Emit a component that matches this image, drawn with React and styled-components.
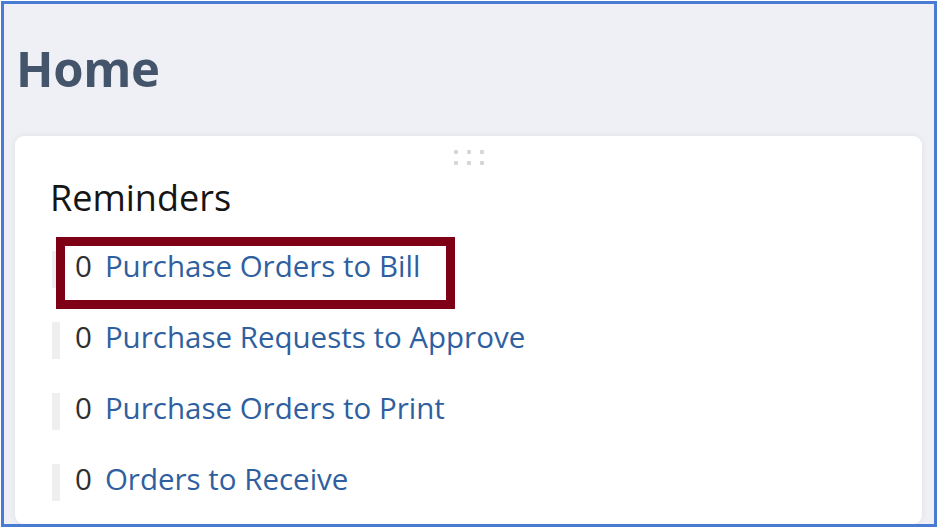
import React from 'react';
import styled, {createGlobalStyle} from 'styled-components';

const GlobalStyle = createGlobalStyle`
  html, body {
    margin: 0;
    padding: 0;
    background: #ffffff;
  }
  body {
    font-family: "Open Sans", "Liberation Sans", sans-serif;
  }
`;

const reminders = [
    {count: 0, label: 'Purchase Orders to Bill', highlighted: true},
    {count: 0, label: 'Purchase Requests to Approve'},
    {count: 0, label: 'Purchase Orders to Print'},
    {count: 0, label: 'Orders to Receive'},
];

export const Frame = styled.div`
  box-sizing: border-box;
  margin: 1px;
  width: 936px;
  height: 526px;
  border: 3px solid #4a7bd2;
  background: #eef0f5;
  overflow: hidden;
  display: flex;
  flex-direction: column;
  padding: 0 12px 0 11px;
`;

export const PageTitle = styled.h1`
  margin: 34px 0 0 1px;
  font-size: 49px;
  line-height: 60px;
  font-weight: 700;
  color: #44546b;
  letter-spacing: -0.3px;
`;

export const Card = styled.section`
  margin-top: 38px;
  flex: 1 0 auto;
  background: #ffffff;
  border-radius: 9px;
  box-shadow: 0 0 6px rgba(40, 50, 80, 0.08);
  padding: 14px 37px 0 37px;
  display: flex;
  flex-direction: column;
`;

export const DragHandle = styled.div`
  align-self: center;
  display: grid;
  grid-template-columns: repeat(3, 4px);
  grid-auto-rows: 4px;
  column-gap: 9px;
  row-gap: 7px;
  span {
    background: #d6d6d6;
    border-radius: 1px;
  }
`;

export const CardTitle = styled.h2`
  margin: 12px 0 0 -2px;
  font-size: 36px;
  line-height: 41px;
  font-weight: 400;
  color: #151515;
`;

export const List = styled.ul`
  list-style: none;
  margin: 33px 0 0 0;
  padding: 0;
  display: flex;
  flex-direction: column;
  gap: 34px;
`;

export const Row = styled.li`
  position: relative;
  display: flex;
  align-items: flex-start;
  height: 37px;
  font-size: 29.5px;
  line-height: 30px;
  &::before {
    content: '';
    flex: 0 0 8px;
    height: 37px;
    background: #efefef;
    margin-right: 15px;
  }
  ${(props) => props.highlighted && `
    &::after {
      content: '';
      position: absolute;
      left: 4px;
      top: -14px;
      width: 399px;
      height: 72px;
      box-sizing: border-box;
      border: 9px solid #7f0016;
    }
  `}
`;

export const Count = styled.span`
  color: #2f2f2f;
  margin-right: 13px;
`;

export const ReminderLink = styled.a`
  color: #2f5f9f;
  text-decoration: none;
`;

export default function App() {
    return (
        <>
            <GlobalStyle/>
            <Frame>
                <PageTitle>Home</PageTitle>
                <Card>
                    <DragHandle>
                        <span/><span/><span/><span/><span/><span/>
                    </DragHandle>
                    <CardTitle>Reminders</CardTitle>
                    <List>
                        {reminders.map((item) => (
                            <Row key={item.label} highlighted={item.highlighted}>
                                <Count>{item.count}</Count>
                                <ReminderLink href="#">{item.label}</ReminderLink>
                            </Row>
                        ))}
                    </List>
                </Card>
            </Frame>
        </>
    );
}
